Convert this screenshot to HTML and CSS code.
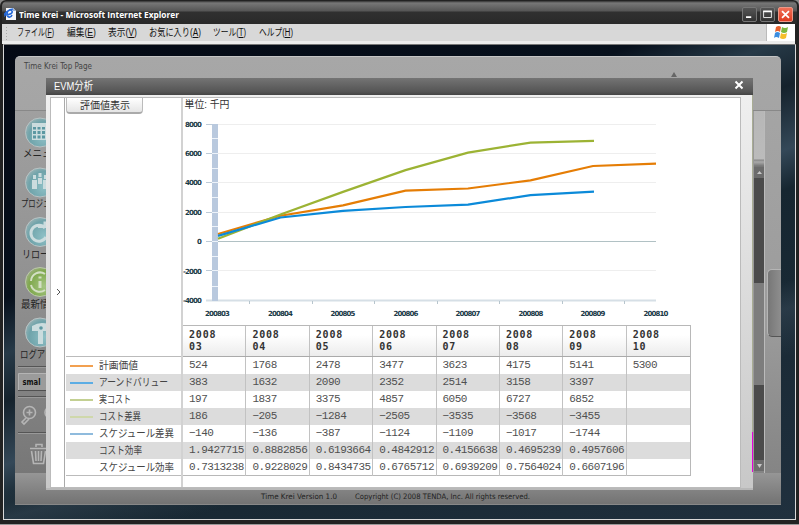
FILE: index.html
```html
<!DOCTYPE html>
<html lang="ja">
<head>
<meta charset="utf-8">
<title>Time Krei - Microsoft Internet Explorer</title>
<link rel="stylesheet" href="styles.css">
</head>
<body>
<div class="window">
  <header class="titlebar">
    <svg class="page-icon" width="13" height="14" viewBox="0 0 13 14"><path d="M2 1h7l3 3v9H2z" fill="#f5f7fb"/><path d="M9 1v3h3z" fill="#9fb6d8"/><path d="M1 8c5 0 8-2 7-4-1-2-5-1-5 3 0 4 4 4 5 1M0 10c-1-3 5-8 9-8" fill="none" stroke="#2468d8" stroke-width="1.6"/></svg>
    <svg class="window-title" width="164" height="16"><text x="0" y="11.500" textLength="160" lengthAdjust="spacingAndGlyphs">Time Krei - Microsoft Internet Explorer</text></svg>
    <div class="controls">
      <svg class="control" viewBox="0 0 15 15"><path d="M3.5 10.5h6" stroke="#fff" stroke-width="2"/></svg>
      <svg class="control" viewBox="0 0 15 15"><path d="M3 4h9v7H3z" fill="none" stroke="#fff"/><path d="M2.500 4h10" stroke="#fff" stroke-width="2"/></svg>
      <svg class="control close" viewBox="0 0 15 15"><path d="M3.500 3.500l8 8m0-8l-8 8" stroke="#fff" stroke-width="2"/></svg>
    </div>
  </header>
  <nav class="menubar">
    <svg class="menu" width="300" height="17">
      <path d="M2.500 3v13" stroke="#aaa" stroke-dasharray="1 2"/>
      <text x="13" y="12" textLength="37" lengthAdjust="spacingAndGlyphs">ファイル(<tspan class="key">F</tspan>)</text>
      <text x="63" y="12" textLength="29" lengthAdjust="spacingAndGlyphs">編集(<tspan class="key">E</tspan>)</text>
      <text x="104" y="12" textLength="29" lengthAdjust="spacingAndGlyphs">表示(<tspan class="key">V</tspan>)</text>
      <text x="145" y="12" textLength="52" lengthAdjust="spacingAndGlyphs">お気に入り(<tspan class="key">A</tspan>)</text>
      <text x="209" y="12" textLength="33" lengthAdjust="spacingAndGlyphs">ツール(<tspan class="key">T</tspan>)</text>
      <text x="255" y="12" textLength="34" lengthAdjust="spacingAndGlyphs">ヘルプ(<tspan class="key">H</tspan>)</text>
    </svg>
    <div class="flag"><svg width="17" height="15" viewBox="0 0 17 15"><path d="M3 2q3-2 5 0L7 7Q5 5 2 7z" fill="#e8602c"/><path d="M9 2q3 2 6 0l-1 5q-3 2-6 0z" fill="#7cb83c"/><path d="M2 8q2-2 5 0l-1 5q-3-2-5 0z" fill="#3c8ee0"/><path d="M8 8q3 2 6 0l-1 5q-3 2-6 0z" fill="#f5bd2a"/></svg></div>
  </nav>
  <main class="desktop">
    <section class="app">
      <div class="app-head">
        <svg width="150" height="20"><text x="9" y="11.500" textLength="68" lengthAdjust="spacingAndGlyphs">Time Krei Top Page</text></svg>
        <span class="up-arrow"></span>
      </div>
      <div class="app-main">
        <aside class="sidebar">
          <svg width="36" height="363" viewBox="15 110 36 363">
            <defs><radialGradient id="blue" cx=".65" cy=".65" r=".7"><stop stop-color="#8fc0c6"/><stop offset=".75" stop-color="#6fa3aa"/><stop offset="1" stop-color="#93b1b4"/></radialGradient>
            <radialGradient id="green" cx=".65" cy=".65" r=".7"><stop stop-color="#a5c583"/><stop offset=".75" stop-color="#7fa84d"/><stop offset="1" stop-color="#9cb07f"/></radialGradient></defs>
            <g fill="url(#blue)" stroke="#b9c3c4"><circle cx="40" cy="131.500" r="14.500"/><circle cx="40" cy="181.500" r="14.500"/><circle cx="40" cy="231" r="14.500"/><circle cx="40" cy="331.500" r="14.500"/></g>
            <circle cx="40" cy="281" r="14.500" fill="url(#green)" stroke="#bcc8ac"/>
            <path d="M32 122h16v17H32z" fill="#cbdcde"/>
            <path d="M33 126h3v2.500h-3zM37.500 126h3v2.500h-3zM42 126h3v2.500h-3zM33 130h3v3h-3zM37.500 130h3v3h-3zM42 130h3v3h-3zM33 134.500h3v3h-3zM37.500 134.500h3v3h-3zM42 134.500h3v3h-3z" fill="#5c98a2"/>
            <path d="M32 179h5v9h-5zM38 177h4v6h-4zM43 179h5v9h-5zM33 174h3v4h-3zM38.500 172h3v4h-3zM44 174h3v4h-3z" fill="#cbdcde"/>
            <path d="M45 227a8 8 0 1 0 1 9M38 225.500h7v-5" stroke="#cbdcde" stroke-width="3" fill="none"/>
            <path d="M32 325q8-5 16-2v7H32zM38 330h5v13h-5z" fill="#cbdcde"/><circle cx="41" cy="327" r="1.800" fill="#5c98a2"/>
            <g fill="none" stroke="#d3dfc4" stroke-width="2"><path d="M31 280a9 9 0 0 1 14-7M31 284a9 9 0 0 0 14 5"/><path d="M40 280v7M40 275.500v2" stroke-width="3"/></g>
            <g class="side-label"><text x="23" y="156" textLength="38" lengthAdjust="spacingAndGlyphs">メニュー</text><text x="21" y="206" textLength="44" lengthAdjust="spacingAndGlyphs">プロジェクト</text><text x="22" y="257" textLength="36" lengthAdjust="spacingAndGlyphs">リロード</text><text x="21" y="307" textLength="38" lengthAdjust="spacingAndGlyphs">最新情報</text><text x="20" y="357" textLength="42" lengthAdjust="spacingAndGlyphs">ログアウト</text></g>
            <path d="M18 365.500h40M18 395.500h40M18 431.500h40" stroke="#555"/><path d="M18 366.500h40M18 396.500h40M18 432.500h40" stroke="#999"/>
            <path d="M18.500 372.500H60v17H18.500z" fill="#9b9b9b" stroke="#b4b4b4"/><path d="M18 389.500h40" stroke="#505050"/>
            <text class="size" x="22.500" y="383.500" textLength="18" lengthAdjust="spacingAndGlyphs">smal</text>
            <g fill="none" stroke="#b5b5b5" stroke-width="1.600"><circle cx="29.500" cy="411.500" r="6"/><path d="M26.500 411.500h6M29.500 408.500v6M26 417l-4 4 2 2 5-5"/><circle cx="51" cy="411.500" r="6"/><path d="M30 447.500h17M36 446v-2.500h6v2.500M31.500 450l2 12.500h10l2-12.500M35.500 450l.5 10M38.500 450v10M41.500 450l-.5 10"/></g>
          </svg>
        </aside>
        <div class="right-rail">
          <div class="scroll-col">
            <div class="rail-top"></div>
            <div class="scroll-arrow"><svg width="11" height="10"><path d="M3 7h5L5.500 4z" fill="#c8c8c8"/></svg></div>
            <div class="track track-a"></div><div class="thumb"></div><div class="track track-b"></div>
            <div class="scroll-arrow"><svg width="11" height="11"><path d="M3 4h5L5.500 8z" fill="#c8c8c8"/></svg></div>
          </div>
          <div class="drawer"></div>
        </div>
      </div>
      <footer class="app-foot"><svg width="300" height="16"><text x="6" y="10.500" textLength="76" lengthAdjust="spacingAndGlyphs">Time Krei Version 1.0</text><text x="100" y="10.500" textLength="175" lengthAdjust="spacingAndGlyphs">Copyright (C) 2008 TENDA, Inc. All rights reserved.</text></svg></footer>
    </section>
    <section class="modal">
      <div class="modal-title"><svg width="80" height="17"><text x="8" y="12" textLength="39" lengthAdjust="spacingAndGlyphs">EVM分析</text></svg>
        <svg class="modal-close" width="10" height="10" viewBox="0 0 10 10"><path d="M1.500 1.500l7 7m0-7l-7 7" stroke="#fff" stroke-width="2"/></svg></div>
      <div class="modal-body">
        <div class="collapse"><svg width="12" height="10"><path d="M6 2l3 3-3 3" fill="none" stroke="#555"/></svg></div>
        <div class="legend-pane">
          <div class="button-area"><div class="button"><svg width="74" height="15"><text x="13" y="10.500" textLength="50" lengthAdjust="spacingAndGlyphs">評価値表示</text></svg></div></div>
          <div class="legend">
            <div class="row"><i class="line orange"></i><svg class="name"><text x="0" y="10.500" textLength="39" lengthAdjust="spacingAndGlyphs">計画価値</text></svg></div>
            <div class="row"><i class="line blue"></i><svg class="name"><text x="0" y="10.500" textLength="69" lengthAdjust="spacingAndGlyphs">アーンドバリュー</text></svg></div>
            <div class="row"><i class="line green"></i><svg class="name"><text x="0" y="10.500" textLength="32" lengthAdjust="spacingAndGlyphs">実コスト</text></svg></div>
            <div class="row"><i class="line olive"></i><svg class="name"><text x="0" y="10.500" textLength="42" lengthAdjust="spacingAndGlyphs">コスト差異</text></svg></div>
            <div class="row"><i class="line steel"></i><svg class="name"><text x="0" y="10.500" textLength="75" lengthAdjust="spacingAndGlyphs">スケジュール差異</text></svg></div>
            <div class="row"><i class="line"></i><svg class="name"><text x="0" y="10.500" textLength="43" lengthAdjust="spacingAndGlyphs">コスト効率</text></svg></div>
            <div class="row"><i class="line"></i><svg class="name"><text x="0" y="10.500" textLength="75" lengthAdjust="spacingAndGlyphs">スケジュール効率</text></svg></div>
          </div>
        </div>
        <div class="chart-pane">
          <svg class="chart" width="557" height="227" viewBox="183 98 557 227">
            <text class="unit" x="184.500" y="107.500" textLength="45" lengthAdjust="spacingAndGlyphs">単位: 千円</text>
            <path d="M218 124.500h438M218 153.500h438M218 182.500h438M218 212.500h438M218 270.500h438" stroke="#eee"/>
            <path d="M206 124.500h6M206 153.500h6M206 182.500h6M206 212.500h6M206 241.500h6M206 270.500h6M206 300.500h6" stroke="#bdcbd8"/>
            <path d="M218 241.500h438" stroke="#b1c1c4"/><path d="M206 300.500h450" stroke="#d6dfe6" stroke-width="2"/>
            <path d="M249.500 301v3M312.500 301v3M374.500 301v3M437.500 301v3M499.500 301v3M562.500 301v3M624.500 301v3" stroke="#b7c5cd"/>
            <path d="M212 124h6v177h-6z" fill="#b9c9de"/>
            <path d="M212 138.500h6M212 153.500h6M212 168.500h6M212 182.500h6M212 197.500h6M212 212.500h6M212 226.500h6M212 241.500h6M212 256.500h6M212 270.500h6M212 286.500h6" stroke="#edf3fa"/>
            <g fill="none" stroke-width="2.200">
              <path d="M218 234l62.500-18.300 62.500-10.400 62.500-14.700 62.500-2.100 62.500-8.200 62.500-14.300 63-2.300" stroke="#e57d05"/>
              <path d="M218 238.700l62.500-24.200 62.500-22.600 62.500-21.800 62.500-17.500 62.500-10 63.500-1.800" stroke="#9cb334"/>
              <path d="M218 235.900l62.500-18.400 62.500-6.700 62.500-3.800 62.500-2.400 62.500-9.500 63.500-3.500" stroke="#0b8ad9"/>
            </g>
            <g class="axis end"><text x="201" y="126.500">8000</text><text x="201" y="155.500">6000</text><text x="201" y="185">4000</text><text x="201" y="215">2000</text><text x="201" y="244">0</text><text x="201" y="273.500">-2000</text><text x="201" y="303">-4000</text></g>
            <g class="axis mid"><text x="217" y="316">200803</text><text x="280" y="316">200804</text><text x="342.500" y="316">200805</text><text x="405.500" y="316">200806</text><text x="467.500" y="316">200807</text><text x="530.500" y="316">200808</text><text x="592.500" y="316">200809</text><text x="655.500" y="316">200810</text></g>
          </svg>
          <div class="table">
            <div class="tr head"><b>2008<br>03</b><b>2008<br>04</b><b>2008<br>05</b><b>2008<br>06</b><b>2008<br>07</b><b>2008<br>08</b><b>2008<br>09</b><b>2008<br>10</b></div>
            <div class="tr"><span>524</span><span>1768</span><span>2478</span><span>3477</span><span>3623</span><span>4175</span><span>5141</span><span>5300</span></div>
            <div class="tr"><span>383</span><span>1632</span><span>2090</span><span>2352</span><span>2514</span><span>3158</span><span>3397</span><span></span></div>
            <div class="tr"><span>197</span><span>1837</span><span>3375</span><span>4857</span><span>6050</span><span>6727</span><span>6852</span><span></span></div>
            <div class="tr"><span>186</span><span>−205</span><span>−1284</span><span>−2505</span><span>−3535</span><span>−3568</span><span>−3455</span><span></span></div>
            <div class="tr"><span>−140</span><span>−136</span><span>−387</span><span>−1124</span><span>−1109</span><span>−1017</span><span>−1744</span><span></span></div>
            <div class="tr"><span>1.9427715</span><span>0.8882856</span><span>0.6193664</span><span>0.4842912</span><span>0.4156638</span><span>0.4695239</span><span>0.4957606</span><span></span></div>
            <div class="tr"><span>0.7313238</span><span>0.9228029</span><span>0.8434735</span><span>0.6765712</span><span>0.6939209</span><span>0.7564024</span><span>0.6607196</span><span></span></div>
          </div>
        </div>
      </div>
      <i class="edge"></i>
    </section>
  </main>
</div>
</body>
</html>
```
FILE: styles.css
```css
* { box-sizing: border-box; }
body { margin: 0; overflow: hidden; background: #888; font-family: "Liberation Sans", "Noto Sans CJK JP", sans-serif; }
svg { display: block; flex: none; }
.window { width: 799px; height: 525px; display: flex; flex-direction: column; padding: 1px 2px 3px; background: #222; border-radius: 6px 6px 0 0; border-bottom: 1px solid #999; }
.titlebar { height: 23px; flex: none; display: flex; align-items: center; padding: 3px 4px 0 2px; background: linear-gradient(#333 0, #777 2px, #555 10px, #303030 11px, #292929 100%); border-radius: 5px 5px 0 0; }
.window-title { margin-left: 2px; font: bold 9.5px "Open Sans", "Noto Sans", sans-serif; fill: #fff; }
.controls { display: flex; gap: 3px; margin-left: auto; }
.control { width: 15px; height: 15px; border: 1px solid #777; border-radius: 2px; background: linear-gradient(#555, #333); }
.close { background: linear-gradient(#f07058, #df3b20); border-color: #ec9888; }
.menubar { height: 20px; flex: none; display: flex; margin: 0 2px 0 0; padding-left: 2px; background: #d8d8d8; border-bottom: 3px solid #ececec; }
.menu { font-size: 10px; fill: #111; }
.key { text-decoration: underline; }
.flag { width: 29px; height: 17px; display: flex; justify-content: center; align-items: center; margin-left: auto; background: #fff; border-left: 1px solid #bbb; }
.desktop { position: relative; height: 476px; margin: 0 1px; padding: 11px 14px 17px 11px; border: 1px solid #d8d8d8; border-top: 1px solid #777; background: linear-gradient(165deg, transparent 65%, #3b4d5c77 69%, transparent 76%), linear-gradient(158deg, #040914 0, #07101c 32%, #273a48 39%, #15222c 45%, #344858 53%, #162630 58%, #20303e 100%); }
.app { height: 447px; display: flex; flex-direction: column; background: linear-gradient(#a7a7a7, #9b9b9b 60%, #808080); border-radius: 5px 5px 0 0; border-top: 1px solid #c5c5c5; }
.app-head { height: 53px; flex: none; display: flex; justify-content: space-between; font: 8px "DejaVu Sans", sans-serif; fill: #444; }
.up-arrow { width: 6px; height: 5px; margin: 15px 104px 0 0; background: #666; clip-path: polygon(50% 0, 100% 100%, 0 100%); }
.app-main { height: 363px; flex: none; display: flex; justify-content: space-between; border-top: 1px solid #888; }
.sidebar { width: 36px; background: linear-gradient(#a0a0a0, #929292 45%, #777); overflow: hidden; }
.side-label { font-size: 10.5px; fill: #252525; }
.size { font: bold 9px "DejaVu Sans", sans-serif; fill: #111; }
.right-rail { width: 28px; display: flex; }
.scroll-col { width: 12px; flex: none; display: flex; flex-direction: column; border-right: 1px solid #bbb; border-left: 1px solid #999; }
.rail-top { height: 56px; background: linear-gradient(#b7b7b7, #bbb 48px, #888 49px, #aaa 51px, #777 55px); }
.scroll-arrow { height: 11px; background: #6c6c6c; }
.track { background: #4b4b4b; }
.track-a { height: 105px; }
.track-b { height: 75px; }
.thumb { height: 102px; background: #7d7d7d; }
.drawer { width: 14px; height: 68px; margin: 158px 0 0 2px; border: 1px solid #b5b5b5; border-right: 0; border-bottom-color: #555; border-radius: 5px 0 0 5px; background: linear-gradient(90deg, #777, #8e8e8e); }
.app-foot { flex: 1; display: flex; padding: 15px 0 0 240px; font: 7.5px "DejaVu Sans", sans-serif; fill: #222; background: linear-gradient(#969696, #737373); border-bottom: 1px solid #888; }
.modal { position: absolute; left: 42px; top: 33px; width: 707px; height: 412px; background: linear-gradient(#f1f1f1, #c8c8c8); border-bottom: 2px solid #b8b8b8; }
.edge { position: absolute; right: 0; top: 17px; width: 1px; height: 377px; background: linear-gradient(#a9ad94 337px, #e600d6 337px); }
.modal-title { height: 17px; display: flex; justify-content: space-between; font-size: 11px; fill: #fff; background: linear-gradient(#747474, #555 80%, #444); }
.modal-close { margin: 2px 9px 0 0; }
.modal-body { height: 391px; display: flex; margin: 2px 12px 0 4px; background: #fff; border: 1px solid #bbb; }
.collapse { width: 14px; flex: none; padding-top: 189px; border-right: 1px solid #aaa; }
.legend-pane { width: 118px; flex: none; padding-left: 1px; border-right: 2px solid #d2d2d2; }
.button-area { height: 258px; }
.button { width: 77px; height: 16px; font-size: 10.5px; fill: #333; background: linear-gradient(#fff, #e5e5e5); border: 1px solid #bbb; border-top: 0; border-bottom: 2px solid #aaa; border-radius: 0 0 4px 4px; }
.legend { border: solid #bbb; border-width: 1px 0; }
.row { height: 17px; display: flex; align-items: center; }
.row:nth-child(even) { background: #dcdcdc; }
.row:last-child { height: 16px; }
.line { width: 23px; height: 1.500px; margin: 1px 6px 0 4px; }
.orange { background: #f2a050; } .blue { background: #5cade4; } .green { background: #c3d092; } .olive { background: #cfd8ab; } .steel { background: #8fbbdd; }
.name { width: 80px; height: 15px; font-size: 10.5px; fill: #444; }
.chart-pane { flex: 1; }
.unit { font-size: 10.5px; fill: #333; }
.axis { font: bold 7px "DejaVu Sans", sans-serif; letter-spacing: -.9px; fill: #193947; }
.end { text-anchor: end; } .mid { text-anchor: middle; }
.table { width: 508px; border: 1px solid #b8b8b8; border-left: 0; }
.tr { height: 17px; display: grid; grid-template-columns: repeat(8, 1fr); font: 11px/17px "Liberation Mono", monospace; letter-spacing: -.5px; color: #505050; }
.tr:last-child { height: 16px; }
.tr:nth-child(odd) { background: #dcdcdc; }
.tr.head { height: 31px; padding: 0; background: linear-gradient(#fff 30%, #ececec); border-bottom: 1px solid #aaa; font: bold 10px/11.5px "DejaVu Sans Mono", monospace; letter-spacing: .8px; color: #333; }
.tr > * { padding-left: 6px; border-right: 1px solid #c2c2c2; }
.tr > :last-child { border-right: 0; }
.head > b { padding-top: 3px; }
```
